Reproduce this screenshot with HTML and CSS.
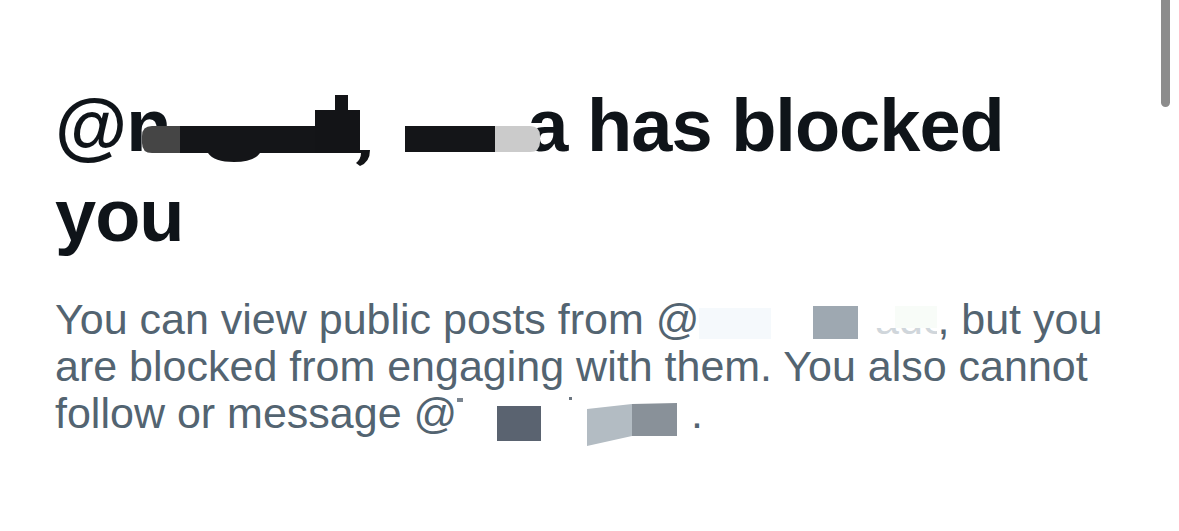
FILE: index.html
```html
<!DOCTYPE html>
<html lang="en">
<head>
    <meta charset="UTF-8">
    <meta name="viewport" content="width=device-width, initial-scale=1.0">
    <title>Blocked</title>
    <link rel="stylesheet" href="styles.css">
</head>
<body>
    <div class="page">
        <div class="blocked">
            <h1 class="title">@n<svg class="hide hide-title" width="385" height="90" viewBox="0 0 385 90">
                    <path d="M10 46 H38 V73 H10 Q0 73 0 63 V56 Q0 46 10 46 Z" fill="#454545"/>
                    <rect x="38" y="46" width="135" height="27" fill="#141518"/>
                    <path d="M66 73 H118 Q112 82 92 82 Q72 82 66 73 Z" fill="#141518"/>
                    <rect x="173" y="30" width="45" height="43" fill="#131417"/>
                    <rect x="193" y="15" width="13" height="15" fill="#131417"/>
                    <path d="M216 70 H228 Q228 82 218 86 L214 83 Q219 79 219 73 H216 Z" fill="#131417"/>
                    <rect x="263" y="46" width="90" height="26" fill="#141518"/>
                    <path d="M353 46 H388 Q398 46 398 56 V62 Q398 72 388 72 H353 Z" fill="#cbcbcb"/>
                </svg>a has blocked you</h1>

            <p class="desc">You can view public posts from @<svg class="hide" width="238" height="47" viewBox="0 0 238 47">
                    <defs>
                        <clipPath id="lowerHalf">
                            <rect x="0" y="32" width="238" height="15"/>
                        </clipPath>
                    </defs>
                    <rect x="0" y="12" width="72" height="31" fill="#f5f9fc"/>
                    <rect x="196" y="10" width="42" height="22" fill="#f8fcf8"/>
                    <rect x="114" y="10" width="45" height="33" fill="#9ea8b1"/>
                    <text x="176" y="38" class="ghost" clip-path="url(#lowerHalf)">ade</text>
                </svg>, but you are blocked from engaging with them. You also cannot follow or message @<svg class="hide" width="222" height="47" viewBox="0 0 222 47">
                    <rect x="0" y="8" width="6" height="4" fill="#7b8590"/>
                    <rect x="112" y="7" width="3" height="3" fill="#6b7580"/>
                    <rect x="40" y="16" width="44" height="35" fill="#5a6370"/>
                    <path d="M130 19 L175 14 V46 L130 56 Z" fill="#b3bcc3"/>
                    <path d="M175 14 L220 13 V46 L175 46 Z" fill="#899199"/>
                </svg> .</p>
        </div>
        <div class="scroll-thumb"></div>
    </div>
</body>
</html>
```

FILE: styles.css
```css
* {
    margin: 0;
    padding: 0;
    box-sizing: border-box;
}
body {
    background-color: #fff;
    font-family: "Liberation Sans", Arial, Helvetica, sans-serif;
    overflow: hidden;
}
.page {
    position: relative;
    width: 1179px;
    height: 531px;
    padding: 80px 0 0 55px;
}
.blocked {
    width: 1070px;
}

/* titel */
.title {
    font-size: 74px;
    line-height: 90px;
    font-weight: 700;
    letter-spacing: -1px;
    color: #0f1419;
}
.hide {
    overflow: visible;
}
.title .hide-title {
    position: relative;
    z-index: 1;
    margin-left: -28px;
    vertical-align: -19px;
}

/* keterangan */
.desc {
    margin-top: 35px;
    font-size: 43px;
    line-height: 47px;
    color: #536471;
}
.desc .hide {
    vertical-align: -9px;
}
.desc .ghost {
    font-family: "Liberation Sans", Arial, sans-serif;
    font-size: 43px;
    fill: #d0d6db;
}

/* scrollbar */
.scroll-thumb {
    position: absolute;
    top: 0;
    left: 1161px;
    width: 9px;
    height: 107px;
    background-color: #8c8c8c;
    border-radius: 0 0 5px 5px;
}
```
